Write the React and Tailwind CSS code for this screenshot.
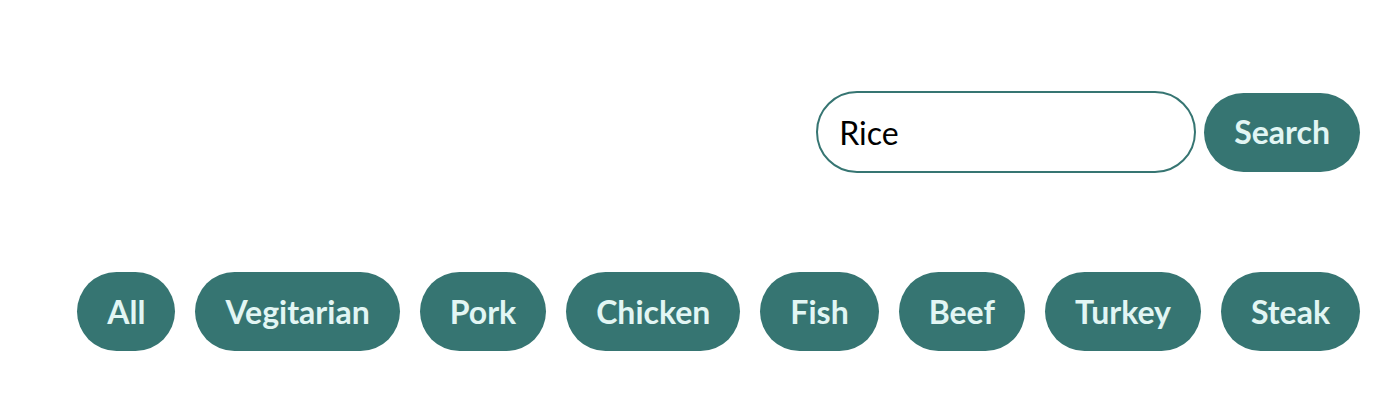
import React from "react";

const cats = ["All", "Vegitarian", "Pork", "Chicken", "Fish", "Beef", "Turkey", "Steak"];

export default function App() {
  return (
    <div className="w-[1394px] h-[406px] bg-white flex flex-col items-end pr-[34px] pt-[91px]" style={{ fontFamily: "Lato, 'Noto Sans', sans-serif" }}>
      <div className="flex items-center gap-[8px]">
        <input
          defaultValue="Rice"
          className="w-[380px] h-[82px] rounded-full border-2 border-[#367572] pl-[21px] text-[32px] text-black outline-none"
          style={{ fontFamily: "Lato, sans-serif" }}
        />
        <button className="h-[79px] px-[30px] rounded-full bg-[#367572] text-[#e2f6f4] text-[32px] font-bold">
          Search
        </button>
      </div>
      <div className="flex gap-[20px] mt-[99px]">
        {cats.map((c) => (
          <button key={c} className="h-[79px] px-[30px] rounded-full bg-[#367572] text-[#e2f6f4] text-[32px] font-bold">
            {c}
          </button>
        ))}
      </div>
    </div>
  );
}
